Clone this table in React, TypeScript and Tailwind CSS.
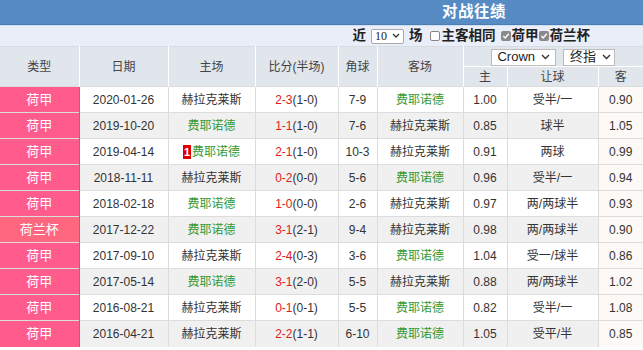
import React from "react";

type Row = {
  type: string;
  date: string;
  home: string;
  homeGreen: boolean;
  badge?: string;
  score: string;
  half: string;
  corner: string;
  away: string;
  awayGreen: boolean;
  h: string;
  line: string;
  a: string;
};

const rows: Row[] = [
  { type: "荷甲", date: "2020-01-26", home: "赫拉克莱斯", homeGreen: false, score: "2-3", half: "(1-0)", corner: "7-9", away: "费耶诺德", awayGreen: true, h: "1.00", line: "受半/一", a: "0.90" },
  { type: "荷甲", date: "2019-10-20", home: "费耶诺德", homeGreen: true, score: "1-1", half: "(1-0)", corner: "7-6", away: "赫拉克莱斯", awayGreen: false, h: "0.85", line: "球半", a: "1.05" },
  { type: "荷甲", date: "2019-04-14", home: "费耶诺德", homeGreen: true, badge: "1", score: "2-1", half: "(1-0)", corner: "10-3", away: "赫拉克莱斯", awayGreen: false, h: "0.91", line: "两球", a: "0.99" },
  { type: "荷甲", date: "2018-11-11", home: "赫拉克莱斯", homeGreen: false, score: "0-2", half: "(0-0)", corner: "5-6", away: "费耶诺德", awayGreen: true, h: "0.96", line: "受半/一", a: "0.94" },
  { type: "荷甲", date: "2018-02-18", home: "费耶诺德", homeGreen: true, score: "1-0", half: "(0-0)", corner: "2-6", away: "赫拉克莱斯", awayGreen: false, h: "0.97", line: "两/两球半", a: "0.93" },
  { type: "荷兰杯", date: "2017-12-22", home: "费耶诺德", homeGreen: true, score: "3-1", half: "(2-1)", corner: "9-4", away: "赫拉克莱斯", awayGreen: false, h: "0.98", line: "两/两球半", a: "0.90" },
  { type: "荷甲", date: "2017-09-10", home: "赫拉克莱斯", homeGreen: false, score: "2-4", half: "(0-3)", corner: "3-6", away: "费耶诺德", awayGreen: true, h: "1.04", line: "受一/球半", a: "0.86" },
  { type: "荷甲", date: "2017-05-14", home: "费耶诺德", homeGreen: true, score: "3-1", half: "(2-0)", corner: "5-5", away: "赫拉克莱斯", awayGreen: false, h: "0.88", line: "两/两球半", a: "1.02" },
  { type: "荷甲", date: "2016-08-21", home: "赫拉克莱斯", homeGreen: false, score: "0-1", half: "(0-1)", corner: "5-5", away: "费耶诺德", awayGreen: true, h: "0.82", line: "受半/一", a: "1.08" },
  { type: "荷甲", date: "2016-04-21", home: "赫拉克莱斯", homeGreen: false, score: "2-2", half: "(1-1)", corner: "6-10", away: "费耶诺德", awayGreen: true, h: "1.05", line: "受平/半", a: "0.85" },
];

const Chevron = () => (
  <svg width="9" height="6" viewBox="0 0 9 6" className="ml-[6px]">
    <path d="M1 1 L4.5 4.5 L8 1" fill="none" stroke="#333" strokeWidth="1.4" />
  </svg>
);

const Checked = () => (
  <span className="inline-flex items-center justify-center w-[10px] h-[10px] bg-[#8a8a8a] rounded-[2px] mr-[1px]">
    <svg width="8" height="8" viewBox="0 0 9 9">
      <path d="M1.5 4.6 L3.6 6.8 L7.6 2" fill="none" stroke="#fff" strokeWidth="1.6" />
    </svg>
  </span>
);

export default function App() {
  const font = { fontFamily: '"Liberation Sans", Arial, "Noto Sans CJK SC", sans-serif' };
  const td = "border-r border-[#dcdcdc] text-center align-middle p-0";
  return (
    <div className="w-[643px] h-[350px] overflow-hidden bg-white text-[#333]" style={font}>
      <div className="h-[25px] bg-[#568bc4] flex items-center justify-end pr-[137px] border-b border-[#4b7cb4]">
        <span className="text-white font-bold text-[15.5px] tracking-[0.5px]">对战往绩</span>
      </div>
      <div className="h-[21px] bg-[#e9eef8] border-t border-[#cfe0f4] flex items-center justify-end pr-[53px] text-[13.5px] font-bold text-[#222]">
        <span>近</span>
        <span className="mx-[5px] inline-flex items-center h-[15px] px-[3px] bg-white border border-[#aaa] rounded-[2px] text-[12px] font-normal" style={{ fontFamily: '"Liberation Serif", serif' }}>
          10
          <svg width="8" height="6" viewBox="0 0 8 6" className="ml-[5px]">
            <path d="M1 1 L4 4 L7 1" fill="none" stroke="#333" strokeWidth="1.3" />
          </svg>
        </span>
        <span>场</span>
        <span className="ml-[7px] mr-[2px] inline-block w-[10px] h-[10px] bg-white border border-[#888] rounded-[2px]" />
        <span>主客相同</span>
        <span className="ml-[5px] inline-flex items-center"><Checked />荷甲</span>
        <span className="inline-flex items-center"><Checked />荷兰杯</span>
      </div>
      <table className="table-fixed border-collapse w-[643px] text-[12px]">
        <colgroup>
          <col className="w-[79px]" />
          <col className="w-[89px]" />
          <col className="w-[87px]" />
          <col className="w-[83px]" />
          <col className="w-[39px]" />
          <col className="w-[86px]" />
          <col className="w-[44px]" />
          <col className="w-[91px]" />
          <col className="w-[45px]" />
        </colgroup>
        <thead>
          <tr className="h-[20px] bg-[#e1e6ed] text-[#444]">
            <th rowSpan={2} className="font-normal border-r border-[#fff] border-t border-t-[#d5dce4]">类型</th>
            <th rowSpan={2} className="font-normal border-r border-[#fff] border-t border-t-[#d5dce4]">日期</th>
            <th rowSpan={2} className="font-normal border-r border-[#fff] border-t border-t-[#d5dce4]">主场</th>
            <th rowSpan={2} className="font-normal border-r border-[#fff] border-t border-t-[#d5dce4]">比分(半场)</th>
            <th rowSpan={2} className="font-normal border-r border-[#fff] border-t border-t-[#d5dce4]">角球</th>
            <th rowSpan={2} className="font-normal border-r border-[#fff] border-t border-t-[#d5dce4]">客场</th>
            <th colSpan={3} className="font-normal border-t border-t-[#d5dce4] p-0">
              <div className="flex items-center justify-center gap-[7px] pt-[1px]">
                <span className="inline-flex items-center h-[17px] px-[5px] bg-white border border-[#bbb] text-[13px] text-[#222]">
                  Crown
                  <Chevron />
                </span>
                <span className="inline-flex items-center h-[17px] pl-[6px] pr-[3px] bg-white border border-[#bbb] text-[13px] text-[#222]">
                  终指
                  <Chevron />
                </span>
              </div>
            </th>
          </tr>
          <tr className="h-[20px] bg-[#e1e6ed] text-[#444]">
            <th className="font-normal border-r border-t border-[#fff]">主</th>
            <th className="font-normal border-r border-t border-[#fff]">让球</th>
            <th className="font-normal border-t border-[#fff]">客</th>
          </tr>
        </thead>
        <tbody>
          {rows.map((r, i) => {
            const bg = i % 2 === 0 ? "bg-white" : "bg-[#f0f0f0]";
            return (
              <tr key={i} className={`h-[26px] ${bg} border-t border-[#dcdcdc]`}>
                <td className={`${r.type === "荷兰杯" ? "bg-[#ff6680]" : "bg-[#ff5b8c]"} text-white text-[13px] text-center border-r border-[#e04a7a]`}>
                  {r.type}
                </td>
                <td className={td}>{r.date}</td>
                <td className={td}>
                  {r.badge && (
                    <span className="inline-block bg-[#e00000] text-white font-bold text-[11px] leading-[14px] px-[1px] align-middle mr-[1px]">{r.badge}</span>
                  )}
                  <span className={`align-middle ${r.homeGreen ? "text-[#339933]" : "text-[#333]"}`}>{r.home}</span>
                </td>
                <td className={td}>
                  <span className="text-[#e02020]">{r.score}</span>
                  <span>{r.half}</span>
                </td>
                <td className={td}>{r.corner}</td>
                <td className={`${td} ${r.awayGreen ? "text-[#339933]" : ""}`}>{r.away}</td>
                <td className={td}>{r.h}</td>
                <td className={td}>{r.line}</td>
                <td className="text-center bg-[#fcf9f6]">{r.a}</td>
              </tr>
            );
          })}
        </tbody>
      </table>
    </div>
  );
}
